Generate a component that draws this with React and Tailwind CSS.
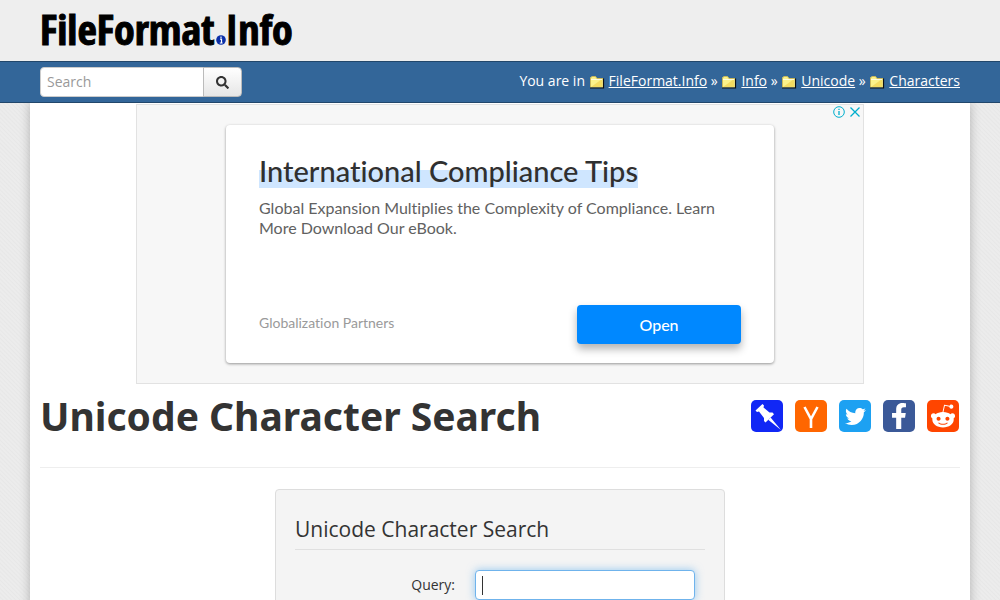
import { FaFacebookF, FaRedditAlien, FaSearch, FaTwitter } from "react-icons/fa";

const crumbs = ["FileFormat.Info", "Info", "Unicode", "Characters"];

function Folder() {
  return (
    <svg className="mr-1 inline-block h-4 w-4" viewBox="0 0 16 16" aria-hidden="true">
      <path d="M1 13.500V4l1.500-1.500h4L8 4.500h6v9z" fill="#fbf28a" />
      <path d="M2 13l11-8v8z" fill="#f3dc62" />
      <path d="M1 14h13.500V4.500" fill="none" stroke="#111" strokeWidth="1.200" />
      <path d="M1.500 13V4l1.500-1.500h3.500L8 4.500h6" fill="none" stroke="#c9b85a" />
      <path d="M2 5.500h11" stroke="#fffde0" />
    </svg>
  );
}

function Pushpin() {
  return (
    <svg className="h-8 w-8" viewBox="0 0 32 32" fill="#fff" aria-hidden="true">
      <path d="M4.500 10.500 L11.500 4 L13 5.500 L12.500 7.500 L18.500 12.500 L21.500 12.500 L23 14.200 L14.500 22.500 L13 21 L13 18 L8 11.500 L6 12z" />
      <path d="M17.200 19.800 L19.600 17.400 L30 30z" />
    </svg>
  );
}

const shares = [
  { name: "Pinboard", color: "bg-[#1127f5]", icon: <Pushpin /> },
  {
    name: "Hacker News",
    color: "bg-[#ff6600]",
    icon: (
      <svg className="h-8 w-8" viewBox="0 0 32 32" aria-hidden="true">
        <path d="M9.500 7 L16 19 L22.500 7 M16 18V28" fill="none" stroke="#fff" strokeWidth="2.600" />
      </svg>
    ),
  },
  { name: "Twitter", color: "bg-[#1da1f2]", icon: <FaTwitter className="h-[21px] w-[21px]" /> },
  { name: "Facebook", color: "bg-[#3b5998]", icon: <FaFacebookF className="h-[26px] w-[26px]" /> },
  { name: "Reddit", color: "bg-[#ff4500]", icon: <FaRedditAlien className="h-[26px] w-[26px]" /> },
];

function Header() {
  return (
    <header className="z-10">
      <div className="bg-[#eeeeee] px-10 pt-1 pb-2">
        <a
          href="#home"
          className="flex items-baseline font-['Noto_Sans_Condensed','Open_Sans_Condensed',sans-serif] text-[42px] leading-[49px] font-extrabold text-black [-webkit-text-stroke:1px_black]"
        >
          FileFormat
          <svg className="ml-px h-[10px] w-[10px]" viewBox="0 0 10 10" role="img" aria-label=".">
            <circle cx="5" cy="5" r="4.800" fill="#0b2fa8" />
            <path d="M4 4.200h1.500V8M3.800 8h2.800M5 1.600v1.400" stroke="#fff" strokeWidth="1.200" fill="none" />
          </svg>
          Info
        </a>
      </div>
      <div className="flex items-center justify-between border-y border-[#22476b] bg-[#336699] px-10 py-[5px]">
        <form className="flex" role="search">
          <input
            type="text"
            aria-label="Search"
            placeholder="Search"
            className="h-[30px] w-[164px] rounded-l border border-[#cccccc] bg-white px-1.5 pb-0.5 text-sm placeholder:text-[#999999]"
          />
          <button
            type="button"
            aria-label="Go"
            className="-ml-px flex h-[30px] w-[39px] items-center justify-center rounded-r border border-[#bbbbbb] bg-linear-to-b from-white to-[#e6e6e6] text-[#333333]"
          >
            <FaSearch className="h-[13px] w-[13px]" />
          </button>
        </form>
        <nav className="pb-0.5 text-sm leading-5 text-white" aria-label="Breadcrumb">
          You are in{" "}
          {crumbs.map((c, i) => (
            <span key={c}>
              {i > 0 && " » "}
              <Folder />
              <a href="#crumb" className="underline">{c}</a>
            </span>
          ))}
        </nav>
      </div>
    </header>
  );
}

function Ad() {
  return (
    <aside className="relative mx-auto mt-px max-w-[728px] border border-[#e2e2e2] bg-[#f7f7f7] px-[89px] py-5 font-['Lato',sans-serif] [font-variant-ligatures:none]">
      <div className="absolute top-px right-0.5 flex gap-1">
        <svg className="h-3 w-3" viewBox="0 0 12 12" fill="none" stroke="#00aecd" aria-hidden="true">
          <circle cx="6" cy="6" r="5.300" />
          <path d="M6 5v4M6 2.800v1.300" strokeWidth="1.300" />
        </svg>
        <svg className="h-3 w-3" viewBox="0 0 12 12" fill="none" stroke="#00aecd" strokeWidth="1.300" aria-hidden="true">
          <path d="M1.500 1.500l9 9M10.500 1.500l-9 9" />
        </svg>
      </div>
      <div className="rounded bg-white px-[33px] pt-[29px] pb-[19px] shadow-[0_1px_3px_rgba(0,0,0,0.4)]">
        <h2 className="text-[29px] leading-[34px] font-medium text-[#303030]">
          <span className="bg-linear-to-b from-transparent from-50% to-[#cfe6ff] to-50%">International Compliance Tips</span>
        </h2>
        <p className="mt-2.5 text-base leading-5 text-[#616161]">
          Global Expansion Multiplies the Complexity of Compliance. Learn More Download Our eBook.
        </p>
        <div className="mt-[67px] flex items-center justify-between">
          <span className="pb-1 text-sm text-[#9a9a9a]">Globalization Partners</span>
          <button type="button" className="h-[39px] w-[164px] rounded bg-[#0088ff] text-base font-medium text-white shadow-[0_5px_9px_rgba(0,0,0,0.3)]">
            Open
          </button>
        </div>
      </div>
    </aside>
  );
}

export default function App() {
  return (
    <div className="flex min-h-screen flex-col overflow-x-hidden bg-[#e9e9e9] bg-[repeating-linear-gradient(45deg,#ececec_0px,#ececec_1px,#e7e7e7_2px,#ececec_3px)] font-['Open_Sans',sans-serif] text-sm text-[#333333]">
      <Header />
      <main className="mx-[30px] grow bg-white px-2.5 shadow-[0_0_10px_rgba(0,0,0,0.25)]">
        <Ad />
        <div className="flex items-center justify-between border-b border-[#eeeeee] pt-[7px] pb-[26px]">
          <h1 className="font-['Noto_Sans',sans-serif] text-[39px] leading-[50px] font-bold">Unicode Character Search</h1>
          <div className="flex gap-3 pr-px">
            {shares.map((s) => (
              <a key={s.name} href="#share" aria-label={s.name} className={`flex h-8 w-8 items-center justify-center rounded-[5px] text-white ${s.color}`}>
                {s.icon}
              </a>
            ))}
          </div>
        </div>
        <form className="mx-auto mt-[21px] w-full max-w-[450px] rounded border border-[#dddddd] bg-[#f4f4f4] px-[19px] py-5">
          <h2 className="border-b border-[#e0e0e0] text-[21px] leading-[39px]">Unicode Character Search</h2>
          <div className="mt-5 flex items-center gap-5">
            <label htmlFor="query" className="w-40 text-right">Query:</label>
            <div className="relative">
              <input
                id="query"
                type="text"
                className="h-[30px] w-[220px] rounded border border-[#6fb3ec] bg-white px-1.5 caret-transparent shadow-[0_0_8px_rgba(82,168,236,0.6)] outline-none"
              />
              <span className="pointer-events-none absolute top-1.5 left-[7px] h-[19px] w-px bg-[#333333]" />
            </div>
          </div>
        </form>
      </main>
    </div>
  );
}
